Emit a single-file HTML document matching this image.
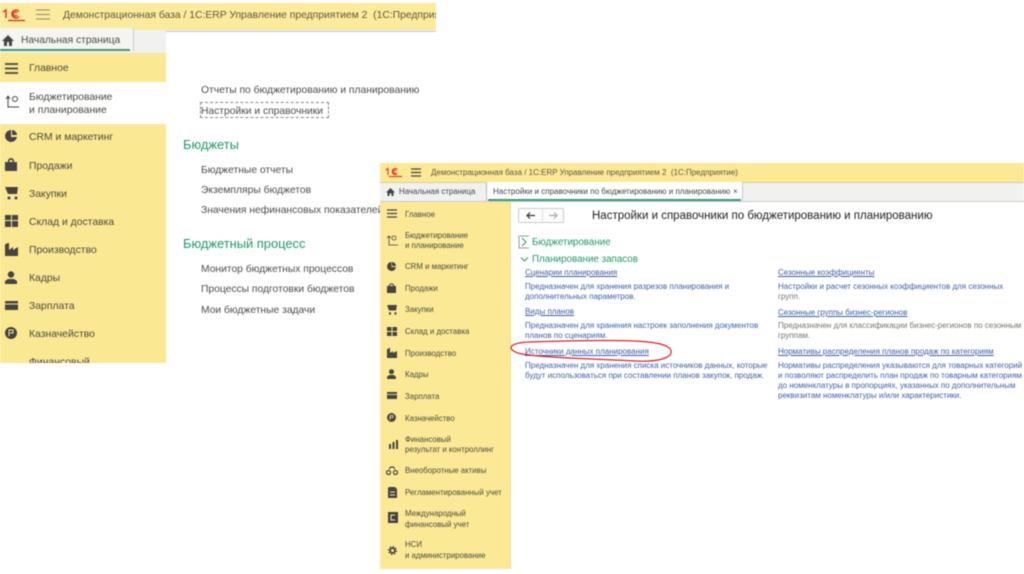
<!DOCTYPE html>
<html lang="ru"><head><meta charset="utf-8"><title>1C</title>
<style>
html,body{margin:0;padding:0;background:#fff;width:1024px;height:574px;overflow:hidden}
body{font-family:"Liberation Sans","Noto Sans CJK SC",sans-serif;color:#444;position:relative}
#page{position:absolute;left:0;top:0;width:1024px;height:574px;overflow:hidden;filter:blur(.45px)}
.a,.t{position:absolute}
.t{white-space:nowrap;line-height:1.15}
.s1{font-size:10.4px;left:29px;color:#4a4a44}
.m1{font-size:10.3px;left:201px;color:#4d4d4d}
.h1{font-size:12.9px;left:183px;color:#1f9a68}
.s2{font-size:7.85px;left:405px;color:#4a4a44}
.l{font-size:8px;color:#3c5ea8;text-decoration:underline}
.d{font-size:8px;color:#3d62aa}
.g{color:#77776c}
svg{position:absolute;overflow:visible}
</style></head><body><div id="page">

<!-- window 1 -->
<div class="a" style="left:0;top:3px;width:436px;height:27px;background:#fbeb9c"></div>
<div class="a" style="left:0;top:30px;width:436px;height:24px;background:#f1f1f0"></div>
<div class="a" style="left:0;top:28px;width:133px;height:23px;background:#f4f4f1;border-right:1px solid #c9c9c9"></div>
<div class="a" style="left:0;top:49px;width:130px;height:1.5px;background:#3c9a78"></div>
<div class="a" style="left:0;top:53px;width:166px;height:310px;background:#fbe893"></div>
<div class="a" style="left:166px;top:31px;width:270px;height:332px;background:#fff;border-top:1px solid #c8c8c8;box-sizing:border-box"></div>
<div class="a" style="left:0;top:82px;width:166px;height:42px;background:#fff"></div>

<svg style="left:2px;top:9px" width="24" height="13" fill="none" stroke="#d6452b" stroke-width="1.6"><path d="M1 3L4 1V9"/><path d="M17 2.500A4 4 0 1 0 17 7.500M15 4A2 2 0 1 0 15 6M6 11.500H23"/></svg>
<svg style="left:36px;top:9px" width="14" height="11"><path d="M0 1H14M0 5.5H14M0 10H14" stroke="#8a8a78" stroke-width="1"/></svg>
<div class="t" style="left:63px;top:10px;font-size:10.35px;color:#5c5a40;width:373px;overflow:hidden">Демонстрационная база / 1С:ERP Управление предприятием 2 &nbsp;(1С:Предприятие)</div>
<svg style="left:2px;top:35px" width="12" height="11"><path d="M6 0L12 6H10V11H7V7H5V11H2V6H0Z" fill="#444"/></svg>
<div class="t" style="left:21px;top:35px;font-size:10.25px;color:#4a4a4a">Начальная страница</div>

<svg style="left:5px;top:63px" width="13" height="11"><path d="M0 1H13M0 5.5H13M0 10H13" stroke="#444" stroke-width="1.8"/></svg>
<div class="t s1" style="top:63px">Главное</div>
<svg style="left:5px;top:95px" width="14" height="14" fill="none" stroke="#444" stroke-width="1"><path d="M3 2V12H14M1 4L3 1L5 4"/><circle cx="10" cy="4" r="2.5"/></svg>
<div class="t s1" style="top:92px">Бюджетирование</div>
<div class="t s1" style="top:104.500px">и планирование</div>
<svg style="left:5px;top:130px" width="12" height="12"><path d="M6 0A6 6 0 1 0 12 7H6Z M7 0V5H12A5 5 0 0 0 7 0Z" fill="#444"/></svg>
<div class="t s1" style="top:132px">CRM и маркетинг</div>
<svg style="left:5px;top:158px" width="12" height="13"><path d="M0 4H12V13H0ZM3 4V2Q6-2 9 2V4H7.5V2.5Q6 1 4.500 2.500V4Z" fill="#444"/></svg>
<div class="t s1" style="top:161px">Продажи</div>
<svg style="left:5px;top:187px" width="13" height="13"><path d="M0 0H13L12 7H3Z" fill="#444"/><circle cx="4" cy="11" r="1.500" fill="#444"/><circle cx="11" cy="11" r="1.500" fill="#444"/></svg>
<div class="t s1" style="top:189px">Закупки</div>
<svg style="left:5px;top:215px" width="13" height="12"><path d="M0 0H6V5H0ZM7 0H13V5H7ZM0 6H6V12H0ZM7 6H13V12H7Z" fill="#444"/></svg>
<div class="t s1" style="top:217px">Склад и доставка</div>
<svg style="left:5px;top:243px" width="13" height="13"><path d="M0 13V1H2V0H4V7L8 4V7L13 4V13Z" fill="#444"/></svg>
<div class="t s1" style="top:245px">Производство</div>
<svg style="left:5px;top:271px" width="12" height="13"><circle cx="6" cy="3.500" r="3.200" fill="#444"/><path d="M0 13V10L3 8H9L12 10V13Z" fill="#444"/></svg>
<div class="t s1" style="top:273px">Кадры</div>
<svg style="left:5px;top:301px" width="13" height="9"><path d="M0 0H13V9H0Z" fill="#444"/><path d="M0 3H13" stroke="#fbe893" stroke-width="1"/></svg>
<div class="t s1" style="top:301px">Зарплата</div>
<svg style="left:5px;top:327px" width="12" height="12"><circle cx="6" cy="6" r="6" fill="#444"/><path d="M4 9V3H8V6H5" stroke="#fbe893" fill="none"/></svg>
<div class="t s1" style="top:329px">Казначейство</div>
<div class="a" style="left:0;top:355px;width:166px;height:8px;overflow:hidden"><div class="t s1" style="top:2px">Финансовый</div></div>

<div class="t m1" style="top:85px">Отчеты по бюджетированию и планированию</div>
<div class="t m1" style="top:105.500px">Настройки и справочники</div>
<div class="a" style="left:200px;top:102px;width:127px;height:14px;border:1px dashed #888"></div>
<div class="t h1" style="top:138px">Бюджеты</div>
<div class="t m1" style="top:165px">Бюджетные отчеты</div>
<div class="t m1" style="top:185px">Экземпляры бюджетов</div>
<div class="t m1" style="top:205px">Значения нефинансовых показателей</div>
<div class="t h1" style="top:237px">Бюджетный процесс</div>
<div class="t m1" style="top:264px">Монитор бюджетных процессов</div>
<div class="t m1" style="top:284px">Процессы подготовки бюджетов</div>
<div class="t m1" style="top:305px">Мои бюджетные задачи</div>

<!-- window 2 -->
<div class="a" style="left:380px;top:163px;width:644px;height:406px;background:#fff"></div>
<div class="a" style="left:380px;top:163px;width:644px;height:20px;background:#fbe995;border-bottom:1px solid #d8d0a0;box-sizing:border-box"></div>
<div class="a" style="left:380px;top:183px;width:644px;height:19px;background:#f1f1f0;border-bottom:1px solid #ccc;box-sizing:border-box"></div>
<div class="a" style="left:486px;top:182px;width:257px;height:19px;background:#fff;border-left:1px solid #bbb;border-right:1px solid #ccc;box-sizing:border-box"></div>
<div class="a" style="left:488px;top:199px;width:253px;height:1.500px;background:#3c9a78"></div>
<div class="a" style="left:380px;top:202px;width:131px;height:367px;background:#fbe995;border-right:1px solid #e8dc9c;box-sizing:border-box"></div>

<svg style="left:385px;top:168px" width="18" height="10" fill="none" stroke="#d6452b" stroke-width="1.200"><path d="M.5 2L3 .5V7"/><path d="M12.500 1.500A3 3 0 1 0 12.500 5.500M11 3A1.500 1.500 0 1 0 11 4.500M4 8.500H17"/></svg>
<svg style="left:411px;top:168px" width="10" height="9"><path d="M0 1H10M0 4.500H10M0 8H10" stroke="#444" stroke-width="1.200"/></svg>
<div class="t" style="left:431px;top:168px;font-size:8px;color:#5a5a4a">Демонстрационная база / 1С:ERP Управление предприятием 2 &nbsp;(1С:Предприятие)</div>
<svg style="left:386px;top:188px" width="9" height="8"><path d="M4.500 0L9 4.500H7.500V8H5.500V5.500H3.500V8H1.500V4.500H0Z" fill="#444"/></svg>
<div class="t" style="left:399px;top:187px;font-size:7.9px;color:#444">Начальная страница</div>
<div class="t" style="left:493px;top:187px;font-size:8.02px;color:#444">Настройки и справочники по бюджетированию и планированию</div>
<div class="t" style="left:733px;top:187px;font-size:8px;color:#444">×</div>

<svg style="left:387px;top:209px" width="10" height="9"><path d="M0 1H10M0 4.500H10M0 8H10" stroke="#444" stroke-width="1.200"/></svg>
<div class="t s2" style="top:210px">Главное</div>
<svg style="left:387px;top:235px" width="11" height="11" fill="none" stroke="#444" stroke-width=".8"><path d="M2 1V10H11M0 3L2 1L4 3"/><circle cx="7" cy="3" r="2"/></svg>
<div class="t s2" style="top:231px">Бюджетирование</div>
<div class="t s2" style="top:241px">и планирование</div>
<svg style="left:387px;top:262px" width="9" height="9"><path d="M4.500 0A4.500 4.500 0 1 0 9 5H4.500Z M5 0V4H9A4 4 0 0 0 5 0Z" fill="#444"/></svg>
<div class="t s2" style="top:262px">CRM и маркетинг</div>
<svg style="left:387px;top:283px" width="9" height="10"><path d="M0 3H9V10H0ZM2 3V1.500Q4.500-1 7 1.500V3H6V2Q4.500 1 3 2V3Z" fill="#444"/></svg>
<div class="t s2" style="top:284px">Продажи</div>
<svg style="left:387px;top:305px" width="10" height="10"><path d="M0 0H10L9 5.500H2Z" fill="#444"/><circle cx="3" cy="8.500" r="1.200" fill="#444"/><circle cx="8.500" cy="8.500" r="1.200" fill="#444"/></svg>
<div class="t s2" style="top:305px">Закупки</div>
<svg style="left:387px;top:327px" width="10" height="9"><path d="M0 0H4.500V4H0ZM5.500 0H10V4H5.500ZM0 5H4.500V9H0ZM5.500 5H10V9H5.500Z" fill="#444"/></svg>
<div class="t s2" style="top:327px">Склад и доставка</div>
<svg style="left:387px;top:348px" width="10" height="10"><path d="M0 10V1H1.500V0H3V5L6 3V5L10 3V10Z" fill="#444"/></svg>
<div class="t s2" style="top:349px">Производство</div>
<svg style="left:387px;top:369px" width="9" height="10"><circle cx="4.500" cy="2.700" r="2.500" fill="#444"/><path d="M0 10V8L2 6H7L9 8V10Z" fill="#444"/></svg>
<div class="t s2" style="top:370px">Кадры</div>
<svg style="left:387px;top:392px" width="10" height="7"><path d="M0 0H10V7H0Z" fill="#444"/><path d="M0 2.500H10" stroke="#fbe995" stroke-width=".8"/></svg>
<div class="t s2" style="top:392px">Зарплата</div>
<svg style="left:387px;top:413px" width="9" height="9"><circle cx="4.500" cy="4.500" r="4.500" fill="#444"/><path d="M3 7V2.500H6V4.500H3.500" stroke="#fbe995" stroke-width=".8" fill="none"/></svg>
<div class="t s2" style="top:414px">Казначейство</div>
<svg style="left:389px;top:440px" width="9" height="9"><path d="M0 4H2V9H0ZM3.500 2H5.500V9H3.500ZM7 0H9V9H7Z" fill="#444"/></svg>
<div class="t s2" style="top:435px">Финансовый</div>
<div class="t s2" style="top:445px">результат и контроллинг</div>
<svg style="left:386px;top:467px" width="12" height="8" fill="none" stroke="#444" stroke-width="1.200"><circle cx="2.500" cy="5.500" r="2"/><circle cx="9.500" cy="5.500" r="2"/><path d="M3 2L5 0H7L9 2"/></svg>
<div class="t s2" style="top:466px">Внеоборотные активы</div>
<svg style="left:388px;top:487px" width="9" height="11"><path d="M1 0H7L9 2V11H0V1Z" fill="#444"/><path d="M2 5H7M2 8H7" stroke="#fbe995"/></svg>
<div class="t s2" style="top:488px">Регламентированный учет</div>
<svg style="left:388px;top:512px" width="10" height="11"><path d="M0 0H10V11H0Z" fill="#444"/><path d="M7 3H3V8H7" stroke="#fbe995" fill="none"/></svg>
<div class="t s2" style="top:509px">Международный</div>
<div class="t s2" style="top:520px">финансовый учет</div>
<svg style="left:388px;top:546px" width="9" height="9" fill="none" stroke="#444"><circle cx="4.500" cy="4.500" r="2.400" stroke-width="1.700"/><circle cx="4.500" cy="4.500" r="3.900" stroke-width="1.300" stroke-dasharray="1.500 1.560"/></svg>
<div class="t s2" style="top:540px">НСИ</div>
<div class="t s2" style="top:551px">и администрирование</div>

<div class="a" style="left:518px;top:208px;width:46px;height:15px;border:1px solid #ccc;border-radius:2px;box-sizing:border-box;background:#fcfcfc"></div>
<div class="a" style="left:542px;top:208px;width:1px;height:15px;background:#ddd"></div>
<svg style="left:526px;top:212px" width="9" height="7" fill="none" stroke="#333" stroke-width="1.200"><path d="M9 3.500H1M4 .5L1 3.500L4 6.500"/></svg>
<svg style="left:549px;top:212px" width="9" height="7" fill="none" stroke="#aaa" stroke-width="1.200"><path d="M0 3.500H8M5 .5L8 3.500L5 6.500"/></svg>
<div class="t" style="left:592px;top:210px;font-size:11.5px;color:#222">Настройки и справочники по бюджетированию и планированию</div>

<svg style="left:519px;top:236px" width="10" height="12" fill="none"><path d="M0 0H10M0 0V12H10" stroke="#999"/><path d="M3 2L7 6L3 10" stroke="#1f9a68"/></svg>
<div class="t" style="left:532px;top:237px;font-size:9.8px;color:#1f9a68">Бюджетирование</div>
<svg style="left:521px;top:257px" width="7" height="5" fill="none" stroke="#1f9a68"><path d="M0 .5L3.500 4L7 .5"/></svg>
<div class="t" style="left:532px;top:254px;font-size:9.8px;color:#1f9a68">Планирование запасов</div>

<div class="t l" style="left:525px;top:268px">Сценарии планирования</div>
<div class="t d" style="left:525px;top:281.500px">Предназначен для хранения разрезов планирования и</div>
<div class="t d" style="left:525px;top:291.500px">дополнительных параметров.</div>
<div class="t l" style="left:525px;top:307px">Виды планов</div>
<div class="t d" style="left:525px;top:321px">Предназначен для хранения настроек заполнения документов</div>
<div class="t d" style="left:525px;top:331px">планов по сценариям.</div>
<div class="t l" style="left:525px;top:347px">Источники данных планирования</div>
<div class="t d" style="left:525px;top:361px">Предназначен для хранения списка источников данных, которые</div>
<div class="t d" style="left:525px;top:371px">будут использоваться при составлении планов закупок, продаж.</div>

<div class="t l" style="left:778px;top:268px">Сезонные коэффициенты</div>
<div class="t d g" style="left:778px;top:281.500px;color:#3d62aa">Настройки и расчет сезонных коэффициентов для сезонных</div>
<div class="t d g" style="left:778px;top:291.500px">групп.</div>
<div class="t l" style="left:778px;top:308px">Сезонные группы бизнес-регионов</div>
<div class="t d g" style="left:778px;top:321px">Предназначен для классификации бизнес-регионов по сезонным</div>
<div class="t d g" style="left:778px;top:331px">группам.</div>
<div class="t l" style="left:778px;top:347px">Нормативы распределения планов продаж по категориям</div>
<div class="t d" style="left:778px;top:361px">Нормативы распределения указываются для товарных категорий</div>
<div class="t d" style="left:778px;top:371px">и позволяют распределить план продаж по товарным категориям</div>
<div class="t d" style="left:778px;top:381px">до номенклатуры в пропорциях, указанных по дополнительным</div>
<div class="t d" style="left:778px;top:391px">реквизитам номенклатуры и/или характеристики.</div>

<svg style="left:0;top:0" width="1024" height="574" fill="none"><path d="M530 342C590 340 640 340 655 343C668 345 672 349 671 353C669 359 655 362 635 361C600 359 545 358 522 354C511 352 509 347 513 345C517 343 523 342 532 342" stroke="#e0202a" stroke-width="1.200"/></svg>
</div></body></html>
